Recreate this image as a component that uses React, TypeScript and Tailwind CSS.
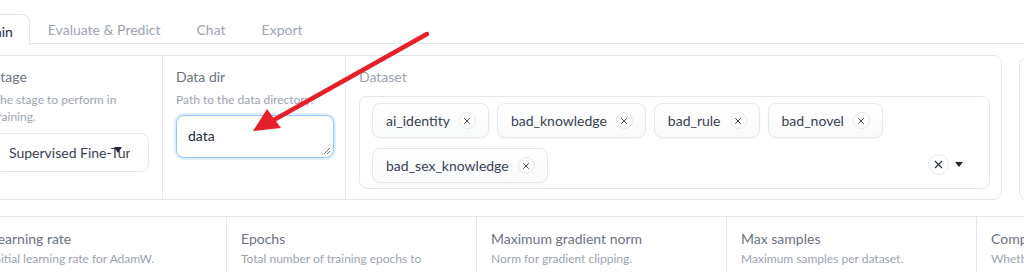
import { X } from "lucide-react";

const tabs = ["Evaluate & Predict", "Chat", "Export"];
const datasets = ["ai_identity", "bad_knowledge", "bad_rule", "bad_novel", "bad_sex_knowledge"];

const params = [
  { label: "Learning rate", info: "Initial learning rate for AdamW." },
  { label: "Epochs", info: "Total number of training epochs to perform." },
  { label: "Maximum gradient norm", info: "Norm for gradient clipping." },
  { label: "Max samples", info: "Maximum samples per dataset." },
  { label: "Compute type", info: "Whether to use mixed precision training." },
];

function Chip({ name }: { name: string }) {
  return (
    <div className="flex h-[35px] items-center gap-[9px] rounded-lg border border-gray-200 bg-gradient-to-b from-white to-[#f9fafb] pl-[13px] pr-[12px] text-[14px] text-[#374151] shadow-[0_1px_2px_rgba(0,0,0,0.04)]">
      <span>{name}</span>
      <span className="flex h-[17px] w-[17px] items-center justify-center rounded-full border border-gray-200 bg-white text-[#374151]">
        <X size={10} strokeWidth={2.25} />
      </span>
    </div>
  );
}

export default function App() {
  return (
    <div className="relative h-[272px] w-[1024px] overflow-hidden bg-white font-['Lato','Liberation_Sans',sans-serif]">
      {/* tab bar */}
      <div className="ml-[-36px] mt-[14px] flex h-[30px] w-[1100px] border-b border-gray-200">
        <div className="relative -mb-px flex h-[31px] items-center rounded-t-lg border-x border-t border-gray-200 bg-white pl-[18px] pr-[16px] pt-[2px] text-[14px] text-[#1f2937]">
          Train
        </div>
        {tabs.map((t) => (
          <div key={t} className="flex items-center px-[18px] pt-[2px] text-[14px] text-[#9ca3af]">
            {t}
          </div>
        ))}
      </div>

      {/* row 1 */}
      <div className="ml-[-21px] mt-[11px] flex w-[1100px] gap-[17px]">
        <div className="flex h-[145px] w-[1023px] rounded-lg border border-gray-200">
          <div className="w-[183px] shrink-0 border-r border-gray-200 px-[13px] pt-[11px]">
            <div className="text-[14px] leading-[20px] text-[#6b7280]">Stage</div>
            <div className="mt-[4px] text-[12px] leading-[17px] text-[#9ca3af]">
              The stage to perform in training.
            </div>
            <div className="relative mt-[8px] flex h-[39px] w-[156px] items-center overflow-hidden rounded-lg border border-gray-200 bg-white pl-[15px] text-[14px] text-[#374151]">
              <span className="w-[121px] overflow-hidden whitespace-nowrap">Supervised Fine-Tuning</span>
              <svg className="absolute left-[120px] top-[13px]" width="8" height="6" viewBox="0 0 8 6">
                <path d="M0 0h8L4 6z" fill="#1f2937" />
              </svg>
            </div>
          </div>

          <div className="w-[183px] shrink-0 border-r border-gray-200 px-[13px] pt-[11px]">
            <div className="text-[14px] leading-[20px] text-[#6b7280]">Data dir</div>
            <div className="mt-[4px] text-[12px] leading-[17px] text-[#9ca3af]">
              Path to the data directory.
            </div>
            <div className="relative mt-[7px] h-[43px] w-[158px] rounded-lg border border-[#93c5fd] bg-white pl-[11px] pt-[9px] text-[14px] text-[#1f2937] shadow-[0_0_0_2px_rgba(191,219,254,0.45)]">
              data
              <svg className="absolute bottom-[2px] right-[2px]" width="8" height="8" viewBox="0 0 8 8">
                <path d="M7 1 1 7M7 4 4 7" stroke="#6b7280" strokeWidth="1" />
              </svg>
            </div>
          </div>

          <div className="flex-1 px-[13px] pt-[11px]">
            <div className="text-[14px] leading-[20px] text-[#9ca3af]">Dataset</div>
            <div className="relative mt-[9px] h-[93px] w-[631px] rounded-lg border border-gray-200 bg-white px-[12px] pt-[6px]">
              <div className="flex w-[550px] flex-wrap gap-x-[8px] gap-y-[10px]">
                {datasets.map((d) => (
                  <Chip key={d} name={d} />
                ))}
              </div>
              <div className="absolute right-[26px] top-[57px] flex items-center gap-[6px]">
                <span className="flex h-[21px] w-[21px] items-center justify-center rounded-full border border-gray-200 bg-white text-[#1f2937]">
                  <X size={13} strokeWidth={2} />
                </span>
                <svg width="8" height="5" viewBox="0 0 8 5">
                  <path d="M0 0h8L4 5z" fill="#1f2937" />
                </svg>
              </div>
            </div>
          </div>
        </div>
        <div className="mt-[2px] h-[143px] w-[100px] rounded-lg border border-gray-200" />
      </div>

      {/* row 2 */}
      <div className="ml-[-23px] mt-[16px] flex w-[1300px] border-t border-gray-200">
        {params.map((p) => (
          <div key={p.label} className="h-[80px] w-[250px] shrink-0 border-r border-gray-200 px-[14px] pt-[12px]">
            <div className="whitespace-nowrap text-[14px] leading-[20px] text-[#6b7280]">{p.label}</div>
            <div className="text-[12px] leading-[20px] text-[#9ca3af]">{p.info}</div>
          </div>
        ))}
      </div>

      {/* annotation arrow */}
      <svg className="pointer-events-none absolute left-0 top-0" width="1024" height="272">
        <line x1="427" y1="34" x2="272" y2="121" stroke="#e5202a" strokeWidth="4.5" strokeLinecap="round" />
        <path d="M253 131 L267 109 L281 128 Z" fill="#e5202a" />
      </svg>
    </div>
  );
}
